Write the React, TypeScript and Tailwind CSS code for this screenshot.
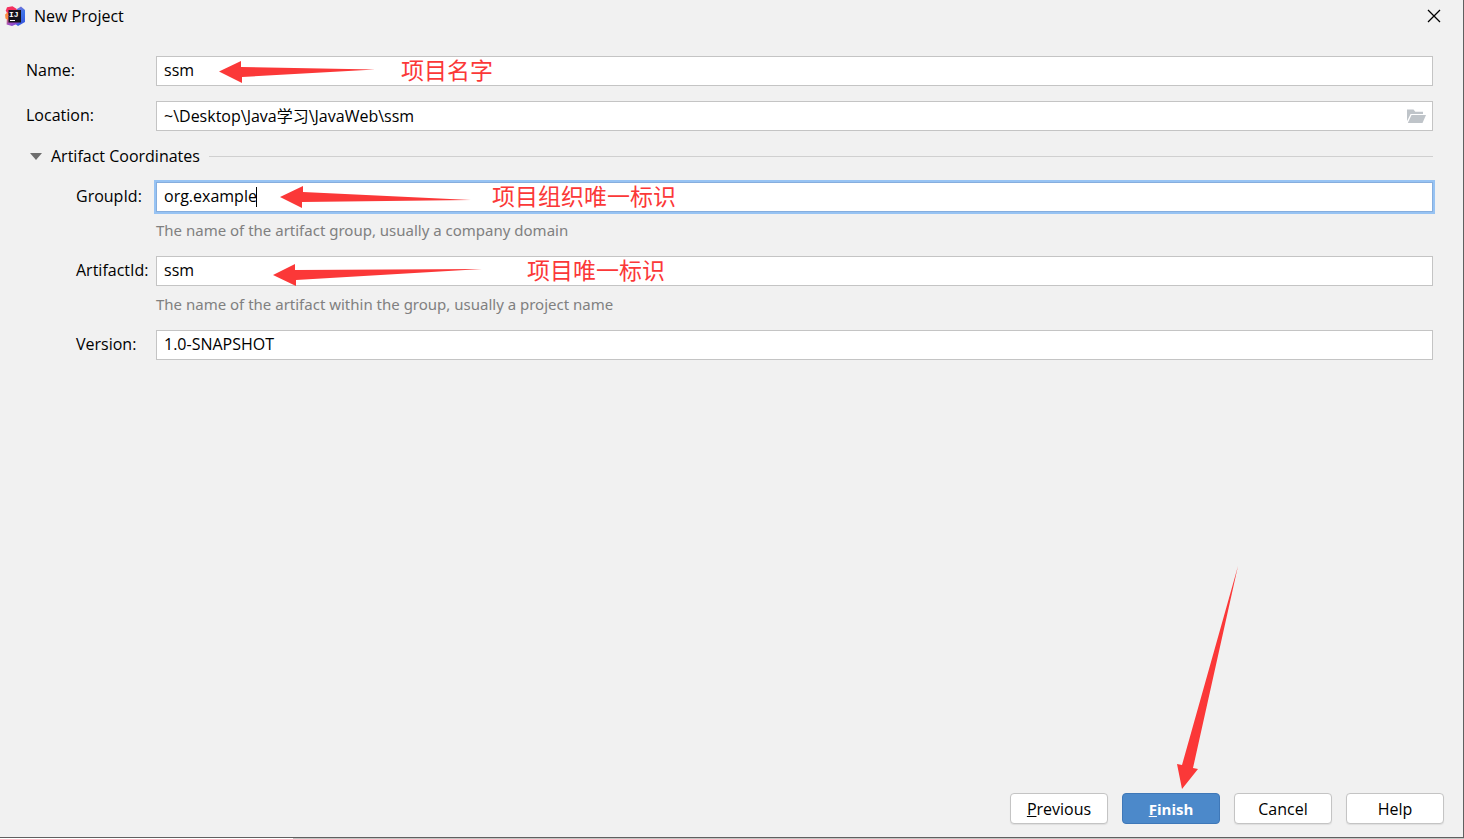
import type { ReactNode } from 'react';
import { clsx } from 'clsx';

function IdeaLogo() {
  return (
    <svg viewBox="0 0 20 20" className="h-5 w-5 shrink-0" aria-hidden="true">
      <defs>
        <linearGradient id="idea-right" x1="0" y1="0" x2="0.3" y2="1">
          <stop offset="0" stopColor="#8a6fd0" />
          <stop offset="0.5" stopColor="#3f74e8" />
          <stop offset="1" stopColor="#3a5be0" />
        </linearGradient>
        <linearGradient id="idea-left" x1="0" y1="0" x2="1" y2="1">
          <stop offset="0" stopColor="#f97a3a" />
          <stop offset="0.5" stopColor="#a24fc0" />
          <stop offset="1" stopColor="#6a3fe0" />
        </linearGradient>
      </defs>
      <path d="M12 3 16 .5l4 3.500v12l-7 4-4-3z" fill="url(#idea-right)" />
      <path d="M2 10 1.800 14l-.2 4.500L7 20l7-3V8z" fill="url(#idea-left)" />
      <path d="M2 1.200 7.500.3 11 2.500l3 4-11 3-2.200-5z" fill="#f5315f" />
      <path d="M.1 8.500 3 6v8l-2.500-1.500z" fill="#fb8a3c" />
      <rect x="3.500" y="4" width="12.500" height="12.500" fill="#14121a" />
      <text x="4" y="10.500" fill="#fff" fontSize="8" fontWeight="700" fontFamily="Liberation Mono, monospace">
        IJ
      </text>
      <rect x="5" y="14" width="5" height="1" fill="#fff" />
    </svg>
  );
}

function FolderIcon() {
  return (
    <svg viewBox="0 0 19 15" className="h-[15px] w-[19px]" fill="#bfc4c9" aria-hidden="true">
      <path d="M0 .5h6.500l1.800 2.300H16V5H3.600L0 12.300z" />
      <path d="M4.500 6H19l-3.500 8H.8z" />
    </svg>
  );
}

type NoteProps = {
  className: string;
  width: number;
  points: string;
  children: ReactNode;
};

// Red arrow and caption laid over a field
function Note({ className, width, points, children }: NoteProps) {
  return (
    <div
      className={clsx(
        'pointer-events-none absolute inset-y-0 flex items-center whitespace-nowrap text-[23px] leading-7 text-[#fb3838]',
        className,
      )}
    >
      <svg width={width} height="30" viewBox={`0 0 ${width} 30`} fill="currentColor" aria-hidden="true">
        <polygon points={points} />
      </svg>
      <span className="pb-0.5">{children}</span>
    </div>
  );
}

type FieldProps = {
  id: string;
  label: string;
  value: string;
  hint?: string;
  nested?: boolean;
  focused?: boolean;
  children?: ReactNode;
};

function Field({ id, label, value, hint, nested, focused, children }: FieldProps) {
  return (
    <div>
      <div className="flex items-center">
        <label htmlFor={id} className={clsx('shrink-0 pb-0.5', nested ? 'w-20' : 'w-[130px]')}>
          {label}
        </label>
        <div
          className={clsx(
            'relative flex h-[30px] min-w-0 flex-1 items-center border bg-white',
            focused ? 'border-[#86aede] ring-2 ring-[#97c3f3]' : 'border-[#c4c4c4]',
          )}
        >
          <input
            id={id}
            type="text"
            defaultValue={value}
            spellCheck={false}
            aria-describedby={hint ? `${id}-hint` : undefined}
            className="h-full min-w-0 flex-1 bg-transparent px-[7px] pb-0.5 outline-none"
          />
          {children}
        </div>
      </div>
      {hint && (
        <p id={`${id}-hint`} className="pt-2 pb-4 pl-20 font-['Noto_Sans',sans-serif] text-[15px] leading-5 text-[#808080]">
          {hint}
        </p>
      )}
    </div>
  );
}

const BUTTON =
  'h-[31px] w-[98px] rounded border border-[#c4c4c4] bg-white text-center shadow-[0_1px_1px_#dedede]';

export default function App() {
  return (
    <div className="flex min-h-screen flex-col bg-[#f1f1f1] font-['Open_Sans','Noto_Sans_CJK_SC',sans-serif] text-base leading-5 text-black">
      <div className="flex flex-1 flex-col border-r border-b border-[#606060]">
        <header className="flex h-8 items-center justify-between pr-[22px] pl-[5px]">
          <div className="flex items-center gap-[9px]">
            <IdeaLogo />
            <h1>New Project</h1>
          </div>
          <button type="button" aria-label="Close">
            <svg viewBox="0 0 14 14" className="h-[14px] w-[14px]" stroke="#000" strokeWidth="1.300" aria-hidden="true">
              <path d="M1 1l12 12M13 1 1 13" />
            </svg>
          </button>
        </header>

        <main className="flex-1 pt-6 pr-[30px] pl-[26px]">
          <div className="flex flex-col gap-[15px]">
            <Field id="name" label="Name:" value="ssm">
              <Note className="left-[62px] gap-6" width={158} points="0,15.5 22,5 22,11 156,13.5 23,21 23,27">
                项目名字
              </Note>
            </Field>
            <Field id="location" label="Location:" value="~\Desktop\Java学习\JavaWeb\ssm">
              <button type="button" aria-label="Browse" className="mr-1.5">
                <FolderIcon />
              </button>
            </Field>
          </div>

          <button type="button" aria-expanded="true" className="flex h-[51px] w-full items-center gap-[9px] pl-1">
            <svg viewBox="0 0 12 7" className="h-[7px] w-3" fill="#6e6e6e" aria-hidden="true">
              <path d="M0 0h12L6 7z" />
            </svg>
            <span className="pb-0.5">Artifact Coordinates</span>
            <span className="h-px flex-1 bg-[#d0d0d0]" />
          </button>

          <div className="pl-[50px]">
            <Field
              id="group-id"
              label="GroupId:"
              value="org.example"
              hint="The name of the artifact group, usually a company domain"
              nested
              focused
            >
              <span className="absolute left-[99px] h-5 w-px bg-black" />
              <Note className="left-[123px] gap-5" width={192} points="0,15 23,4 23,10 191,18 22,20 22,26">
                项目组织唯一标识
              </Note>
            </Field>
            <Field
              id="artifact-id"
              label="ArtifactId:"
              value="ssm"
              hint="The name of the artifact within the group, usually a project name"
              nested
            >
              <Note className="left-[116px] gap-11" width={210} points="0,19 22,8 22,14 209,13 23,24 23,30">
                项目唯一标识
              </Note>
            </Field>
            <Field id="version" label="Version:" value="1.0-SNAPSHOT" nested />
          </div>
        </main>

        <footer className="flex justify-end gap-[14px] pr-[19px] pb-[13px]">
          <button type="button" className={BUTTON}>
            <u>P</u>revious
          </button>
          <div className="relative">
            <svg
              viewBox="0 0 63 224"
              className="pointer-events-none absolute bottom-full left-[54px] mb-1 h-[224px] w-[63px]"
              fill="#fb3838"
              aria-hidden="true"
            >
              <polygon points="6,224 1,199 6,200 62,1 17,203 22,204" />
            </svg>
            <button
              type="button"
              className="h-[31px] w-[98px] rounded border border-[#3f78b8] bg-[#4c89ca] text-center text-[15px] font-bold text-white"
            >
              <u>F</u>inish
            </button>
          </div>
          <button type="button" className={BUTTON}>
            Cancel
          </button>
          <button type="button" className={BUTTON}>
            Help
          </button>
        </footer>
      </div>
      <div className="flex h-px">
        <div className="w-1/5 bg-white" />
        <div className="flex-1 bg-[#c4c6c4]" />
      </div>
    </div>
  );
}
